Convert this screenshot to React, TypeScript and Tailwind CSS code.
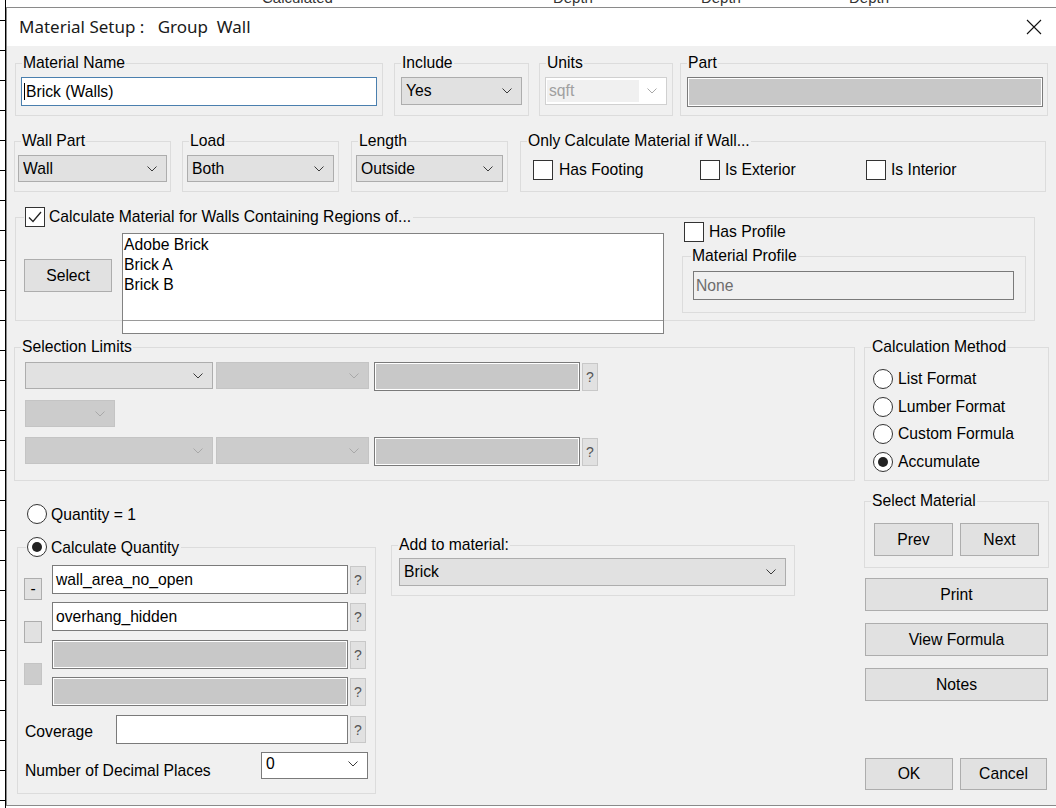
import React from "react";

type Variant = "normal" | "disabled" | "white";

const dropStyles: Record<Variant, string> = {
  normal: "bg-[#e1e1e1] border-[#adadad]",
  disabled: "bg-[#cccccc] border-[#c4c4c4]",
  white: "bg-white border-[#7a7a7a]",
};

function Chevron({ muted = false }: { muted?: boolean }) {
  return (
    <svg width="10" height="6" viewBox="0 0 10 6" className="shrink-0">
      <path
        d="M0.5 0.5 L5 5 L9.5 0.5"
        fill="none"
        stroke={muted ? "#a8a8a8" : "#3a3a3a"}
        strokeWidth="1"
      />
    </svg>
  );
}

function Dropdown({
  value = "",
  className = "",
  variant = "normal",
}: {
  value?: string;
  className?: string;
  variant?: Variant;
}) {
  return (
    <div
      className={`flex shrink-0 items-center justify-between border pl-[4px] pr-[9px] ${dropStyles[variant]} ${className}`}
    >
      <span className="truncate">{value}</span>
      <Chevron muted={variant === "disabled"} />
    </div>
  );
}

function Help({ className = "" }: { className?: string }) {
  return (
    <div
      className={`flex w-[16px] shrink-0 items-center justify-center border border-[#c8c8c8] bg-[#e1e1e1] text-[14px] text-[#555] ${className}`}
    >
      ?
    </div>
  );
}

function GrayBox({ className = "" }: { className?: string }) {
  return (
    <div
      className={`shrink-0 border border-[#7a7a7a] bg-[#c8c8c8] shadow-[inset_0_0_0_1px_#ffffff] ${className}`}
    />
  );
}

function TextInput({ value = "", className = "" }: { value?: string; className?: string }) {
  return (
    <div
      className={`flex shrink-0 items-center border border-[#7a7a7a] bg-white pl-[3px] ${className}`}
    >
      {value}
    </div>
  );
}

function Button({ label = "", className = "" }: { label?: string; className?: string }) {
  return (
    <div
      className={`flex shrink-0 items-center justify-center border border-[#adadad] bg-[#e1e1e1] ${className}`}
    >
      {label}
    </div>
  );
}

function Checkbox({ checked = false }: { checked?: boolean }) {
  return (
    <div className="flex h-[20px] w-[20px] shrink-0 items-center justify-center border border-[#333] bg-white">
      {checked && (
        <svg width="16" height="14" viewBox="0 0 16 14">
          <path d="M2 7.5 L6 11.5 L14 2" fill="none" stroke="#222" strokeWidth="1.3" />
        </svg>
      )}
    </div>
  );
}

function Radio({ checked = false }: { checked?: boolean }) {
  return (
    <div className="flex h-[20px] w-[20px] shrink-0 items-center justify-center rounded-full border border-[#333] bg-white">
      {checked && <div className="h-[10px] w-[10px] rounded-full bg-[#222]" />}
    </div>
  );
}

function Group({
  label,
  className = "",
  children,
}: {
  label?: React.ReactNode;
  className?: string;
  children?: React.ReactNode;
}) {
  return (
    <fieldset className={`shrink-0 border border-[#dcdcdc] ${className}`}>
      {label && <legend className="ml-[6px] px-[1px] leading-[18px]">{label}</legend>}
      {children}
    </fieldset>
  );
}

function RulerStrip() {
  const ticks = [];
  for (let y = 20; y < 805; y += 30) ticks.push(y);
  return (
    <svg width="6" height="808" className="shrink-0">
      <line x1="5.5" y1="0" x2="5.5" y2="808" stroke="#000" strokeWidth="1" />
      {ticks.map((y) => (
        <line key={y} x1="0" y1={y + 0.5} x2="6" y2={y + 0.5} stroke="#000" strokeWidth="1" />
      ))}
    </svg>
  );
}

export default function App() {
  return (
    <div className="flex h-[808px] w-[1056px] overflow-hidden bg-white font-['Liberation_Sans',Arial,sans-serif] text-[15.7px] leading-[18px] text-black">
      <RulerStrip />
      <div className="flex w-[1050px] shrink-0 flex-col">
        {/* window behind the dialog */}
        <div className="flex h-[7px] overflow-hidden text-[15px] text-[#333]">
          <span className="ml-[256px] mt-[-11px]">Calculated</span>
          <span className="ml-[220px] mt-[-11px]">Depth</span>
          <span className="ml-[108px] mt-[-11px]">Depth</span>
          <span className="ml-[108px] mt-[-11px]">Depth</span>
        </div>

        <div className="flex w-[1060px] shrink-0 flex-col border-b border-l border-t border-[#8a8a8a]">
          {/* title bar */}
          <div className="flex h-[38px] items-center justify-between bg-white">
            <span className="whitespace-pre pl-[12px] font-['Noto_Sans',sans-serif] text-[17px] text-[#1a1a1a]">
              Material Setup :   Group  Wall
            </span>
            <svg width="16" height="16" viewBox="0 0 16 16" className="mr-[24px]">
              <path d="M1 1 L15 15 M15 1 L1 15" stroke="#111" strokeWidth="1.1" />
            </svg>
          </div>

          {/* body */}
          <div className="flex h-[759px] flex-col bg-[#f0f0f0]">
            {/* row 1 */}
            <div className="mt-[8px] flex items-start">
              <Group label="Material Name" className="ml-[8px] h-[62px] w-[368px]">
                <div className="ml-[5px] mt-[5px] flex h-[29px] w-[356px] items-center border border-[#4a7fae] bg-white pl-[2px]">
                  <span className="mr-[1px] h-[17px] w-[1px] bg-black" />
                  Brick (Walls)
                </div>
              </Group>
              <Group label="Include" className="ml-[11px] h-[62px] w-[135px]">
                <Dropdown value="Yes" className="ml-[6px] mt-[5px] h-[28px] w-[121px]" />
              </Group>
              <Group label="Units" className="ml-[10px] h-[62px] w-[134px]">
                <div className="ml-[5px] mt-[5px] flex h-[28px] w-[122px] items-center justify-between border border-[#d0d0d0] bg-white pl-[1px] pr-[9px]">
                  <div className="flex h-[22px] w-[92px] items-center bg-[#f0f0f0] pl-[2px] text-[#a0a0a0]">
                    sqft
                  </div>
                  <Chevron muted />
                </div>
              </Group>
              <Group label="Part" className="ml-[7px] h-[62px] w-[368px]">
                <GrayBox className="ml-[6px] mt-[5px] h-[30px] w-[356px]" />
              </Group>
            </div>

            {/* row 2 */}
            <div className="mt-[16px] flex items-start">
              <Group label="Wall Part" className="ml-[7px] h-[60px] w-[157px]">
                <Dropdown value="Wall" className="ml-[3px] mt-[5px] h-[27px] w-[149px]" />
              </Group>
              <Group label="Load" className="ml-[11px] h-[60px] w-[157px]">
                <Dropdown value="Both" className="ml-[4px] mt-[5px] h-[27px] w-[147px]" />
              </Group>
              <Group label="Length" className="ml-[12px] h-[60px] w-[157px]">
                <Dropdown value="Outside" className="ml-[4px] mt-[5px] h-[27px] w-[147px]" />
              </Group>
              <Group label="Only Calculate Material if Wall..." className="ml-[12px] h-[60px] w-[526px]">
                <div className="ml-[12px] mt-[10px] flex">
                  <div className="flex w-[167px] items-center">
                    <Checkbox />
                    <span className="ml-[6px]">Has Footing</span>
                  </div>
                  <div className="flex w-[166px] items-center">
                    <Checkbox />
                    <span className="ml-[5px]">Is Exterior</span>
                  </div>
                  <div className="flex items-center">
                    <Checkbox />
                    <span className="ml-[5px]">Is Interior</span>
                  </div>
                </div>
              </Group>
            </div>

            {/* row 3 */}
            <div className="mt-[15px] flex items-start">
              <fieldset className="ml-[8px] h-[114px] w-[1020px] shrink-0 border border-[#dcdcdc]">
                <legend className="ml-[8px] flex items-center pr-[2px] pl-[1px]">
                  <Checkbox checked />
                  <span className="ml-[4px]">Calculate Material for Walls Containing Regions of...</span>
                </legend>
                <div className="flex items-start">
                  <Button label="Select" className="ml-[8px] mt-[32px] h-[33px] w-[88px]" />
                  <div className="ml-[10px] mt-[6px] flex h-[101px] w-[542px] shrink-0 flex-col border border-[#828282] bg-white">
                    <div className="flex h-[86px] flex-col pl-[1px] pt-[1px] leading-[20px]">
                      <span>Adobe Brick</span>
                      <span>Brick A</span>
                      <span>Brick B</span>
                    </div>
                    <div className="h-[1px] bg-[#9a9a9a]" />
                  </div>
                  <div className="ml-[18px] mt-[-5px] flex w-[344px] shrink-0 flex-col">
                    <div className="ml-[2px] flex items-center">
                      <Checkbox />
                      <span className="ml-[5px]">Has Profile</span>
                    </div>
                    <fieldset className="mt-[5px] h-[66px] w-[344px] border border-[#dcdcdc]">
                      <legend className="ml-[8px] px-[1px] leading-[18px]">Material Profile</legend>
                      <div className="ml-[10px] mt-[6px] flex h-[29px] w-[321px] items-center border border-[#7a7a7a] bg-[#f0f0f0] pl-[2px] text-[#6d6d6d]">
                        None
                      </div>
                    </fieldset>
                  </div>
                </div>
              </fieldset>
            </div>

            {/* row 4 */}
            <div className="mt-[17px] flex items-start">
              <Group label="Selection Limits" className="ml-[7px] h-[143px] w-[841px]">
                <div className="ml-[10px] mt-[6px] flex items-start">
                  <Dropdown className="h-[27px] w-[188px]" />
                  <Dropdown variant="disabled" className="ml-[3px] h-[27px] w-[153px]" />
                  <GrayBox className="ml-[5px] h-[29px] w-[206px]" />
                  <Help className="ml-[2px] mt-[1px] h-[28px]" />
                </div>
                <div className="ml-[10px] mt-[9px] flex">
                  <Dropdown variant="disabled" className="h-[27px] w-[90px]" />
                </div>
                <div className="ml-[10px] mt-[10px] flex items-start">
                  <Dropdown variant="disabled" className="h-[27px] w-[188px]" />
                  <Dropdown variant="disabled" className="ml-[3px] h-[27px] w-[153px]" />
                  <GrayBox className="ml-[5px] h-[29px] w-[206px]" />
                  <Help className="ml-[2px] mt-[1px] h-[28px]" />
                </div>
              </Group>
              <Group label="Calculation Method" className="ml-[9px] h-[143px] w-[185px]">
                <div className="ml-[8px] mt-[13px] flex h-[20px] items-center">
                  <Radio />
                  <span className="ml-[5px]">List Format</span>
                </div>
                <div className="ml-[8px] mt-[8px] flex h-[20px] items-center">
                  <Radio />
                  <span className="ml-[5px]">Lumber Format</span>
                </div>
                <div className="ml-[8px] mt-[7px] flex h-[20px] items-center">
                  <Radio />
                  <span className="ml-[5px]">Custom Formula</span>
                </div>
                <div className="ml-[8px] mt-[8px] flex h-[20px] items-center">
                  <Radio checked />
                  <span className="ml-[5px]">Accumulate</span>
                </div>
              </Group>
            </div>

            {/* row 5 */}
            <div className="flex items-start">
              <div className="ml-[10px] flex w-[359px] shrink-0 flex-col">
                <div className="ml-[10px] mt-[23px] flex h-[20px] items-center">
                  <Radio />
                  <span className="ml-[4px] pt-[1px]">Quantity = 1</span>
                </div>
                <fieldset className="mt-[13px] h-[257px] w-[359px] border border-[#dcdcdc]">
                  <legend className="ml-[8px] flex items-center pl-[1px] pr-[2px]">
                    <Radio checked />
                    <span className="ml-[4px] pt-[1px]">Calculate Quantity</span>
                  </legend>
                  <div className="flex items-start">
                    <div className="ml-[6px] flex flex-col">
                      <Button label="-" className="mt-[21px] h-[22px] w-[18px]" />
                      <Button className="mt-[21px] h-[22px] w-[18px]" />
                      <div className="mt-[20px] h-[22px] w-[18px] border border-[#c4c4c4] bg-[#cccccc]" />
                    </div>
                    <div className="ml-[10px] flex flex-col">
                      <div className="mt-[8px] flex items-start">
                        <TextInput value="wall_area_no_open" className="h-[29px] w-[296px]" />
                        <Help className="ml-[2px] mt-[1px] h-[28px]" />
                      </div>
                      <div className="mt-[8px] flex items-start">
                        <TextInput value="overhang_hidden" className="h-[29px] w-[296px]" />
                        <Help className="ml-[2px] mt-[1px] h-[28px]" />
                      </div>
                      <div className="mt-[9px] flex items-start">
                        <GrayBox className="h-[29px] w-[296px]" />
                        <Help className="ml-[2px] mt-[1px] h-[28px]" />
                      </div>
                      <div className="mt-[8px] flex items-start">
                        <GrayBox className="h-[29px] w-[296px]" />
                        <Help className="ml-[2px] mt-[1px] h-[28px]" />
                      </div>
                    </div>
                  </div>
                  <div className="mt-[9px] flex items-start">
                    <span className="ml-[7px] flex h-[29px] w-[91px] shrink-0 items-center pt-[5px]">
                      Coverage
                    </span>
                    <TextInput className="h-[29px] w-[232px]" />
                    <Help className="ml-[2px] mt-[1px] h-[27px]" />
                  </div>
                  <div className="mt-[8px] flex items-start">
                    <span className="ml-[7px] mt-[10px] w-[236px] shrink-0">Number of Decimal Places</span>
                    <Dropdown
                      value="0"
                      variant="white"
                      className="h-[27px] w-[107px] items-start pt-[2px] [&>svg]:mt-[6px]"
                    />
                  </div>
                </fieldset>
              </div>

              <Group label="Add to material:" className="ml-[15px] mt-[55px] h-[60px] w-[404px]">
                <Dropdown value="Brick" className="ml-[7px] mt-[4px] h-[28px] w-[387px]" />
              </Group>

              <div className="ml-[69px] flex w-[185px] shrink-0 flex-col">
                <Group label="Select Material" className="mt-[11px] h-[76px] w-[185px]">
                  <div className="ml-[9px] mt-[13px] flex">
                    <Button label="Prev" className="h-[33px] w-[79px]" />
                    <Button label="Next" className="ml-[7px] h-[33px] w-[79px]" />
                  </div>
                </Group>
                <Button label="Print" className="ml-[1px] mt-[10px] h-[33px] w-[183px]" />
                <Button label="View Formula" className="ml-[1px] mt-[12px] h-[33px] w-[183px]" />
                <Button label="Notes" className="ml-[1px] mt-[12px] h-[33px] w-[183px]" />
                <div className="ml-[1px] mt-[57px] flex">
                  <Button label="OK" className="h-[32px] w-[88px]" />
                  <Button label="Cancel" className="ml-[7px] h-[32px] w-[87px]" />
                </div>
              </div>
            </div>
          </div>
        </div>
      </div>
    </div>
  );
}
